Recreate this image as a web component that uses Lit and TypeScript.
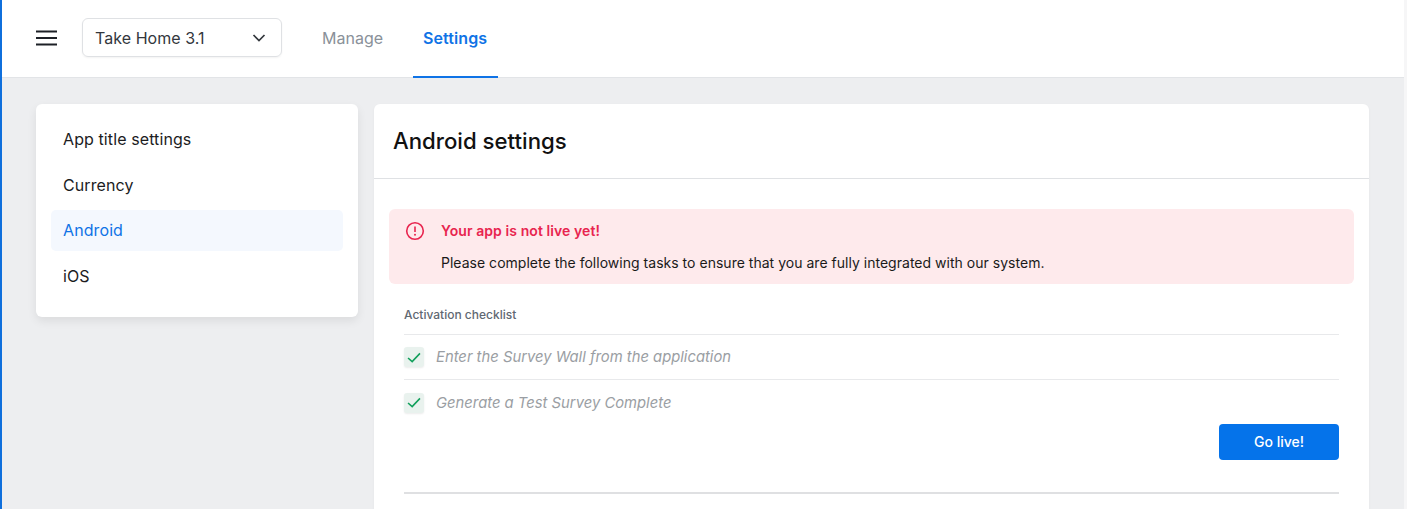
import { LitElement, html, css } from "lit";
import { customElement } from "lit/decorators.js";

@customElement("app-root")
export class AppRoot extends LitElement {
  static styles = css`
    :host { display: block; font-family: Inter, "Liberation Sans", sans-serif; }
    * { box-sizing: border-box; }
    .page { width: 1407px; height: 509px; overflow: hidden; background: #edeef0; border-left: 2px solid #0f6fdc; border-right: 3px solid #f6f6f7; display: flex; flex-direction: column; }
    .top { height: 78px; flex: none; background: #fff; border-bottom: 1px solid #e2e4e7; display: flex; align-items: center; padding-left: 34px; }
    .burger { width: 21px; height: 16px; display: block; flex: none; margin-bottom: 1px; }
    .select { margin-left: 25px; width: 200px; height: 39px; flex: none; border: 1px solid #dfe1e4; border-radius: 6px; display: flex; align-items: center; justify-content: space-between; padding: 0 15px 0 12px; font-size: 16px; letter-spacing: .05px; color: #33373d; box-shadow: 0 1px 2px rgba(0,0,0,.05); margin-bottom: 2px; }
    .select svg { width: 14px; height: 8px; display: block; }
    .tabs { display: flex; align-self: stretch; margin-left: 10px; }
    .tab { padding: 0 30px 1px; display: flex; align-items: center; font-size: 16px; color: #8a9199; margin-bottom: -1px; border-bottom: 2px solid transparent; }
    .tab.on { color: #0f73e6; font-weight: 600; letter-spacing: .1px; border-bottom-color: #0f73e6; padding: 0 11px 1px 10px; }
    .body { flex: 1; min-height: 0; display: flex; align-items: flex-start; gap: 16px; padding: 26px 35px 0 34px; }
    .side { width: 322px; flex: none; background: #fff; border-radius: 6px; box-shadow: 0 4px 10px rgba(0,0,0,.08); padding: 14.6px 15px 20.4px; display: flex; flex-direction: column; gap: 4.6px; }
    .item { height: 41px; border-radius: 5px; padding: 0 12px; display: flex; align-items: center; font-size: 16px; letter-spacing: .1px; color: #1c1c1e; }
    .item.on { background: #f4f8fe; color: #0f73e6; }
    .main { flex: 1; height: 420px; background: #fff; border-radius: 6px 6px 0 0; box-shadow: 0 1px 3px rgba(0,0,0,.04); }
    .head { height: 75px; border-bottom: 1px solid #dfe1e4; padding: 0 19px 2px; display: flex; align-items: center; font-size: 22.2px; font-weight: 500; color: #111; }
    .content { padding: 30px 15px 0; }
    .alert { height: 75px; background: #feeaec; border-radius: 6px; display: flex; padding: 12px 0 0 16px; gap: 16px; }
    .alert svg { width: 20px; height: 20px; flex: none; display: block; }
    .alert-title { font-size: 14px; letter-spacing: .08px; line-height: 20px; font-weight: 600; color: #e8254f; }
    .alert-text { font-size: 14px; letter-spacing: .02px; line-height: 20px; margin-top: 12px; color: #1a1a1a; }
    .check { padding: 0 15px; }
    .check-title { font-size: 12px; font-weight: 500; color: #5f6872; height: 51px; display: flex; align-items: flex-end; padding-bottom: 12px; border-bottom: 1px solid #e8e9eb; }
    .row { height: 45px; display: flex; align-items: center; gap: 12px; border-bottom: 1px solid #e8e9eb; font-size: 14.8px; font-style: italic; color: #9a9ea3; }
    .row.last { border-bottom: none; }
    .box { width: 20px; height: 20px; flex: none; border-radius: 3px; background: #e9f2ee; display: flex; align-items: center; justify-content: center; box-shadow: 0 1px 2px rgba(0,0,0,.08); }
    .box svg { width: 14px; height: 11px; display: block; }
    .actions { display: flex; justify-content: flex-end; margin-top: -1px; }
    .btn { width: 120px; height: 36px; background: #0573ea; color: #fff; border: none; border-radius: 4px; padding: 0 0 2px; font: 500 14px Inter, "Liberation Sans", sans-serif; }
    .rule { height: 2px; background: #dfe0e2; margin-top: 31.5px; }
  `;

  render() {
    const tick = html`<svg viewBox="0 0 15 12"><path d="M1 6.5l4.5 4L14 1.5" stroke="#12a05c" stroke-width="1.7" fill="none"/></svg>`;
    return html`<div class="page">
      <div class="top">
        <svg class="burger" viewBox="0 0 21 16"><path d="M0 1.5h21M0 8h21M0 14.5h21" stroke="#1d2026" stroke-width="2" fill="none"/></svg>
        <div class="select"><span>Take Home 3.1</span>
          <svg viewBox="0 0 14 8"><path d="M1.5 1l5.5 5.5L12.5 1" stroke="#33373d" stroke-width="1.7" fill="none"/></svg></div>
        <div class="tabs"><div class="tab">Manage</div><div class="tab on">Settings</div></div>
      </div>
      <div class="body">
        <div class="side">
          <div class="item">App title settings</div>
          <div class="item">Currency</div>
          <div class="item on">Android</div>
          <div class="item">iOS</div>
        </div>
        <div class="main">
          <div class="head">Android settings</div>
          <div class="content">
            <div class="alert">
              <svg viewBox="0 0 20 20"><circle cx="10" cy="10" r="8.3" stroke="#e8254f" stroke-width="1.6" fill="none"/><path d="M10 5.5v5.5" stroke="#e8254f" stroke-width="1.6"/><circle cx="10" cy="13.8" r="1" fill="#e8254f"/></svg>
              <div>
                <div class="alert-title">Your app is not live yet!</div>
                <div class="alert-text">Please complete the following tasks to ensure that you are fully integrated with our system.</div>
              </div>
            </div>
            <div class="check">
              <div class="check-title">Activation checklist</div>
              <div class="row"><span class="box">${tick}</span>Enter the Survey Wall from the application</div>
              <div class="row last"><span class="box">${tick}</span>Generate a Test Survey Complete</div>
              <div class="actions"><button class="btn">Go live!</button></div>
              <div class="rule"></div>
            </div>
          </div>
        </div>
      </div>
    </div>`;
  }
}
